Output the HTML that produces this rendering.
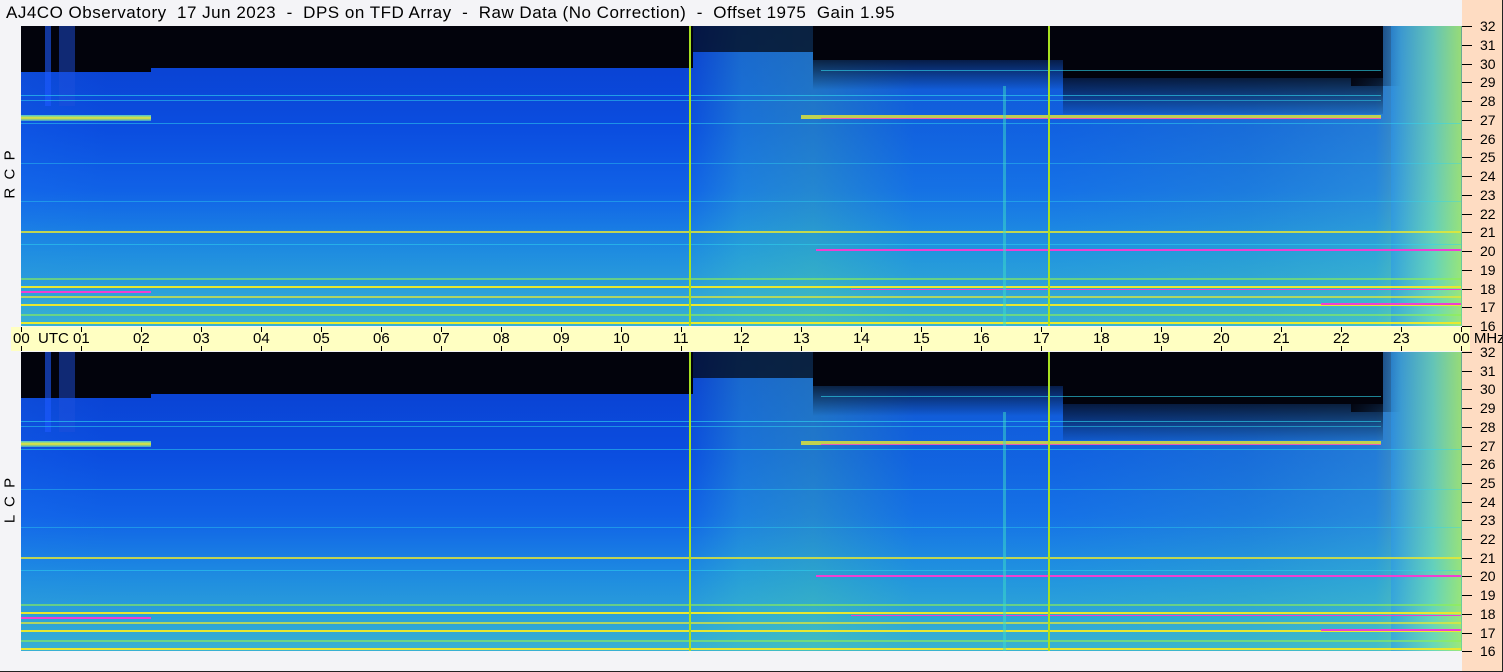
<!DOCTYPE html>
<html><head><meta charset="utf-8"><style>
*{margin:0;padding:0;box-sizing:border-box}
body{width:1503px;height:672px;background:#f4f4f7;position:relative;overflow:hidden;font-family:"Liberation Sans","DejaVu Sans",sans-serif;color:#000}
.title{position:absolute;left:6px;top:3px;font-size:17px;white-space:pre;letter-spacing:0.5px}
.peach{position:absolute;left:1462px;top:0;width:40px;height:671px;background:#fedcc2}
.frame{position:absolute;right:0;top:0;width:1px;height:672px;background:#222}
.frameb{position:absolute;left:0;bottom:0;width:1503px;height:1px;background:#222}
.panel{position:absolute;left:21px;width:1441px;height:300px;overflow:hidden;
 background:linear-gradient(180deg,#0a3ccc 0%,#0b4ee0 35%,#136cea 65%,#1c88ee 85%,#22a0f0 100%)}
.panel div{position:absolute}
.tb{left:0;top:0;width:100%;height:100%;background:linear-gradient(90deg,rgba(40,140,255,.1) 0%,rgba(0,0,0,0) 6%,rgba(0,0,0,0) 46%,rgba(60,200,200,.3) 50%,rgba(80,220,160,.3) 55%,rgba(40,170,220,.22) 62%,rgba(40,170,230,.22) 72%,rgba(60,190,200,.28) 85%,rgba(80,210,200,.35) 94%,rgba(170,240,120,.55) 98%,rgba(170,240,100,.6) 100%)}
.bot{left:0;top:0;width:100%;height:100%;background:linear-gradient(180deg,rgba(0,0,0,0) 55%,rgba(60,220,170,.18) 75%,rgba(120,230,120,.25) 100%)}
.blk{background:#02030c}
.y{background:#e8e830}.m{background:#f040d0}.c{background:#30d8f0}.g{background:#90f050}
.v{top:0;width:2px;height:300px;background:#a8e020}
.ax{position:absolute;left:1462px;width:10px;height:1px;background:#000}
.al{position:absolute;left:1480px;font-size:14px;line-height:14px}
.band{position:absolute;left:11px;top:327px;width:1459px;height:24px;background:#ffffc2}
.tk{position:absolute;width:1px;height:5px;background:#000}
.tl{position:absolute;top:331px;font-size:15px;line-height:15px;white-space:pre}
.side{position:absolute;font-size:15px;transform:rotate(-90deg);white-space:pre;width:100px;text-align:center}
</style></head><body>
<div class="peach"></div>
<div class="title">AJ4CO Observatory  17 Jun 2023  -  DPS on TFD Array  -  Raw Data (No Correction)  -  Offset 1975  Gain 1.95</div>

<div id="p1" class="panel" style="top:26px">
 <div class="tb"></div><div class="bot"></div>
 <div class="blk" style="left:0;top:0;width:672px;height:42px"></div>
 <div class="blk" style="left:0;top:0;width:130px;height:46px"></div>
 <div class="blk" style="left:672px;top:0;width:120px;height:26px;background:rgba(2,3,12,.7)"></div>
 <div class="blk" style="left:792px;top:0;width:250px;height:34px"></div>
 <div style="left:792px;top:34px;width:250px;height:30px;background:linear-gradient(180deg,rgba(2,3,12,.7),rgba(2,3,12,0))"></div>
 <div class="blk" style="left:1042px;top:0;width:320px;height:52px"></div>
 <div style="left:1042px;top:52px;width:320px;height:36px;background:linear-gradient(180deg,rgba(2,3,12,.75),rgba(2,3,12,.1))"></div>
 <div style="left:1330px;top:0;width:50px;height:60px;background:linear-gradient(90deg,rgba(2,3,12,.9),rgba(2,3,12,0))"></div>
 <div style="left:24px;top:0;width:6px;height:80px;background:rgba(30,90,255,.6)"></div>
 <div style="left:38px;top:0;width:16px;height:80px;background:rgba(30,80,220,.5)"></div>
 <div style="left:1370px;top:0;width:70px;height:300px;background:linear-gradient(90deg,rgba(40,150,240,.5),rgba(100,220,200,.6) 60%,rgba(170,240,110,.7))"></div>
 <div class="c" style="left:0;top:69px;width:1360px;height:1px;opacity:.6"></div>
 <div class="c" style="left:0;top:74px;width:1360px;height:1px;opacity:.5"></div>
 <div class="c" style="left:800px;top:44px;width:560px;height:1px;opacity:.6"></div>
 <div style="left:0;top:89px;width:130px;height:6px;background:linear-gradient(180deg,#40c0e0,#e8e830 50%,#30a0e0)"></div>
 <div class="y" style="left:780px;top:89px;width:580px;height:4px;opacity:.8"></div>
 <div class="m" style="left:800px;top:92px;width:560px;height:1px;opacity:.8"></div>
 <div class="c" style="left:0;top:97px;width:1440px;height:1px;opacity:.5"></div>
 <div class="c" style="left:0;top:137px;width:1440px;height:1px;opacity:.4"></div>
 <div class="c" style="left:0;top:175px;width:1440px;height:1px;opacity:.4"></div>
 <div class="y" style="left:0;top:205px;width:1440px;height:2px;opacity:.8"></div>
 <div class="c" style="left:0;top:218px;width:1440px;height:1px;opacity:.5"></div>
 <div class="m" style="left:795px;top:223px;width:645px;height:2px"></div>
 <div class="g" style="left:0;top:252px;width:1440px;height:2px;opacity:.6"></div>
 <div class="y" style="left:0;top:260px;width:1440px;height:2px"></div>
 <div class="m" style="left:0;top:265px;width:130px;height:2px"></div>
 <div class="m" style="left:830px;top:263px;width:610px;height:1px"></div>
 <div class="y" style="left:0;top:270px;width:1440px;height:2px;opacity:.7"></div>
 <div class="y" style="left:0;top:278px;width:1440px;height:2px"></div>
 <div class="m" style="left:1300px;top:277px;width:140px;height:2px"></div>
 <div class="g" style="left:0;top:288px;width:1440px;height:2px;opacity:.6"></div>
 <div class="y" style="left:0;top:296px;width:1440px;height:2px"></div>
 <div class="v" style="left:668px"></div><div class="v" style="left:1027px"></div>
 <div style="left:982px;top:60px;width:3px;height:240px;background:rgba(60,220,200,.5)"></div>
</div>
<div id="p2" class="panel" style="top:352px;height:299px"></div>

<div class="band"></div>
<div class="side" style="top:166px;left:-40px">R  C  P</div>
<div class="side" style="top:492px;left:-40px">L  C  P</div>

<div id="ax"></div>
<script>
document.getElementById('p2').innerHTML=document.getElementById('p1').innerHTML;
var h='';
for(var f=16;f<=32;f++){
 var y1=26+(32-f)*18.75, y2=352+(32-f)*18.7;
 h+='<div class="ax" style="top:'+Math.round(y1)+'px"></div><div class="al" style="top:'+Math.round(y1-7)+'px">'+f+'</div>';
 h+='<div class="ax" style="top:'+Math.round(y2)+'px"></div><div class="al" style="top:'+Math.round(y2-7)+'px">'+f+'</div>';
}
for(var i=0;i<=24;i++){
 var x=21+i*60;
 h+='<div class="tk" style="left:'+x+'px;top:327px"></div><div class="tk" style="left:'+x+'px;top:346px"></div>';
 var s=(i%24<10?'0':'')+(i%24);
 if(i==0)s='00  UTC';
 if(i==24)s='00 MHz';
 h+='<div class="tl" style="left:'+(x-8)+'px">'+s+'</div>';
}
document.getElementById('ax').innerHTML=h;
</script>
<div class="frame"></div><div class="frameb"></div>
</body></html>
